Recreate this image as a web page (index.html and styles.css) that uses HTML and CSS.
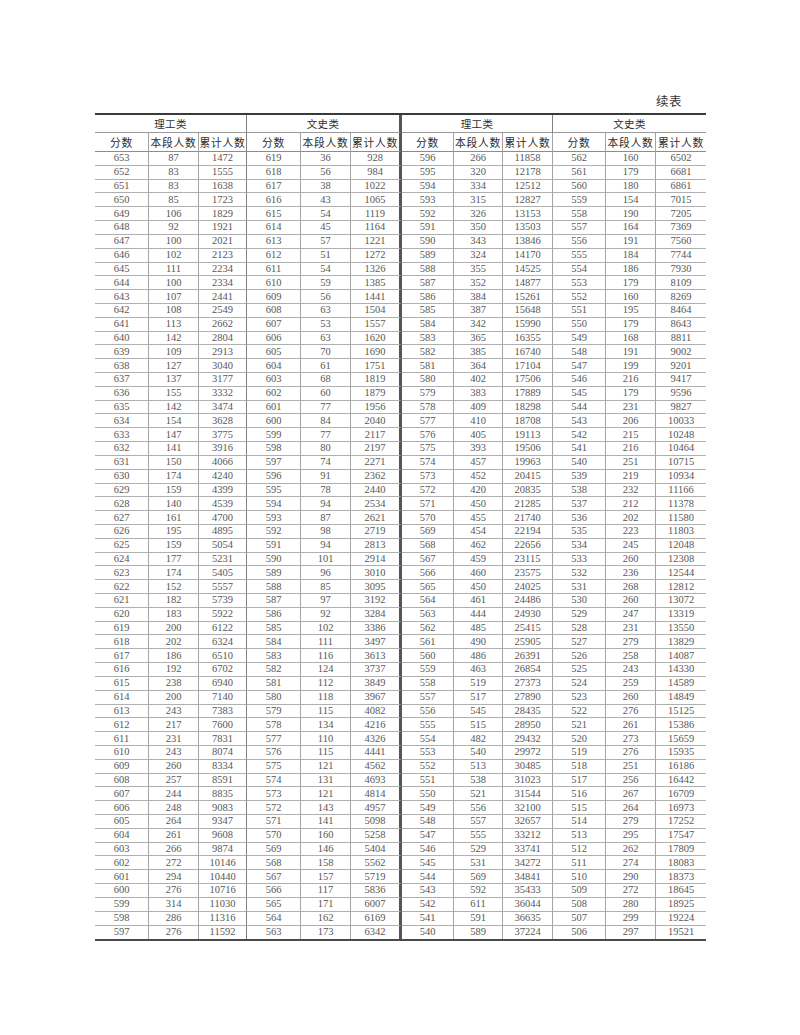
FILE: index.html
```html
<!DOCTYPE html>
<html lang="zh-CN">
<head>
<meta charset="utf-8">
<title>续表</title>
<link rel="stylesheet" href="styles.css">
</head>
<body>
<div class="page">
  <div class="caption">续表</div>
  <table class="score">
    <colgroup>
      <col class="c1"><col class="c2"><col class="c3">
      <col class="c4"><col class="c5"><col class="c6">
      <col class="c7"><col class="c8"><col class="c9">
      <col class="c10"><col class="c11"><col class="c12">
    </colgroup>
    <thead>
      <tr class="cat">
        <th colspan="3" class="grp">理工类</th>
        <th colspan="3" class="mid">文史类</th>
        <th colspan="3">理工类</th>
        <th colspan="3" class="end">文史类</th>
      </tr>
      <tr class="sub">
        <th>分数</th><th>本段人数</th><th>累计人数</th>
        <th>分数</th><th>本段人数</th><th>累计人数</th>
        <th>分数</th><th>本段人数</th><th>累计人数</th>
        <th>分数</th><th>本段人数</th><th>累计人数</th>
      </tr>
    </thead>
    <tbody>
<tr><td>653</td><td>87</td><td>1472</td><td>619</td><td>36</td><td>928</td><td>596</td><td>266</td><td>11858</td><td>562</td><td>160</td><td>6502</td></tr>
<tr><td>652</td><td>83</td><td>1555</td><td>618</td><td>56</td><td>984</td><td>595</td><td>320</td><td>12178</td><td>561</td><td>179</td><td>6681</td></tr>
<tr><td>651</td><td>83</td><td>1638</td><td>617</td><td>38</td><td>1022</td><td>594</td><td>334</td><td>12512</td><td>560</td><td>180</td><td>6861</td></tr>
<tr><td>650</td><td>85</td><td>1723</td><td>616</td><td>43</td><td>1065</td><td>593</td><td>315</td><td>12827</td><td>559</td><td>154</td><td>7015</td></tr>
<tr><td>649</td><td>106</td><td>1829</td><td>615</td><td>54</td><td>1119</td><td>592</td><td>326</td><td>13153</td><td>558</td><td>190</td><td>7205</td></tr>
<tr><td>648</td><td>92</td><td>1921</td><td>614</td><td>45</td><td>1164</td><td>591</td><td>350</td><td>13503</td><td>557</td><td>164</td><td>7369</td></tr>
<tr><td>647</td><td>100</td><td>2021</td><td>613</td><td>57</td><td>1221</td><td>590</td><td>343</td><td>13846</td><td>556</td><td>191</td><td>7560</td></tr>
<tr><td>646</td><td>102</td><td>2123</td><td>612</td><td>51</td><td>1272</td><td>589</td><td>324</td><td>14170</td><td>555</td><td>184</td><td>7744</td></tr>
<tr><td>645</td><td>111</td><td>2234</td><td>611</td><td>54</td><td>1326</td><td>588</td><td>355</td><td>14525</td><td>554</td><td>186</td><td>7930</td></tr>
<tr><td>644</td><td>100</td><td>2334</td><td>610</td><td>59</td><td>1385</td><td>587</td><td>352</td><td>14877</td><td>553</td><td>179</td><td>8109</td></tr>
<tr><td>643</td><td>107</td><td>2441</td><td>609</td><td>56</td><td>1441</td><td>586</td><td>384</td><td>15261</td><td>552</td><td>160</td><td>8269</td></tr>
<tr><td>642</td><td>108</td><td>2549</td><td>608</td><td>63</td><td>1504</td><td>585</td><td>387</td><td>15648</td><td>551</td><td>195</td><td>8464</td></tr>
<tr><td>641</td><td>113</td><td>2662</td><td>607</td><td>53</td><td>1557</td><td>584</td><td>342</td><td>15990</td><td>550</td><td>179</td><td>8643</td></tr>
<tr><td>640</td><td>142</td><td>2804</td><td>606</td><td>63</td><td>1620</td><td>583</td><td>365</td><td>16355</td><td>549</td><td>168</td><td>8811</td></tr>
<tr><td>639</td><td>109</td><td>2913</td><td>605</td><td>70</td><td>1690</td><td>582</td><td>385</td><td>16740</td><td>548</td><td>191</td><td>9002</td></tr>
<tr><td>638</td><td>127</td><td>3040</td><td>604</td><td>61</td><td>1751</td><td>581</td><td>364</td><td>17104</td><td>547</td><td>199</td><td>9201</td></tr>
<tr><td>637</td><td>137</td><td>3177</td><td>603</td><td>68</td><td>1819</td><td>580</td><td>402</td><td>17506</td><td>546</td><td>216</td><td>9417</td></tr>
<tr><td>636</td><td>155</td><td>3332</td><td>602</td><td>60</td><td>1879</td><td>579</td><td>383</td><td>17889</td><td>545</td><td>179</td><td>9596</td></tr>
<tr><td>635</td><td>142</td><td>3474</td><td>601</td><td>77</td><td>1956</td><td>578</td><td>409</td><td>18298</td><td>544</td><td>231</td><td>9827</td></tr>
<tr><td>634</td><td>154</td><td>3628</td><td>600</td><td>84</td><td>2040</td><td>577</td><td>410</td><td>18708</td><td>543</td><td>206</td><td>10033</td></tr>
<tr><td>633</td><td>147</td><td>3775</td><td>599</td><td>77</td><td>2117</td><td>576</td><td>405</td><td>19113</td><td>542</td><td>215</td><td>10248</td></tr>
<tr><td>632</td><td>141</td><td>3916</td><td>598</td><td>80</td><td>2197</td><td>575</td><td>393</td><td>19506</td><td>541</td><td>216</td><td>10464</td></tr>
<tr><td>631</td><td>150</td><td>4066</td><td>597</td><td>74</td><td>2271</td><td>574</td><td>457</td><td>19963</td><td>540</td><td>251</td><td>10715</td></tr>
<tr><td>630</td><td>174</td><td>4240</td><td>596</td><td>91</td><td>2362</td><td>573</td><td>452</td><td>20415</td><td>539</td><td>219</td><td>10934</td></tr>
<tr><td>629</td><td>159</td><td>4399</td><td>595</td><td>78</td><td>2440</td><td>572</td><td>420</td><td>20835</td><td>538</td><td>232</td><td>11166</td></tr>
<tr><td>628</td><td>140</td><td>4539</td><td>594</td><td>94</td><td>2534</td><td>571</td><td>450</td><td>21285</td><td>537</td><td>212</td><td>11378</td></tr>
<tr><td>627</td><td>161</td><td>4700</td><td>593</td><td>87</td><td>2621</td><td>570</td><td>455</td><td>21740</td><td>536</td><td>202</td><td>11580</td></tr>
<tr><td>626</td><td>195</td><td>4895</td><td>592</td><td>98</td><td>2719</td><td>569</td><td>454</td><td>22194</td><td>535</td><td>223</td><td>11803</td></tr>
<tr><td>625</td><td>159</td><td>5054</td><td>591</td><td>94</td><td>2813</td><td>568</td><td>462</td><td>22656</td><td>534</td><td>245</td><td>12048</td></tr>
<tr><td>624</td><td>177</td><td>5231</td><td>590</td><td>101</td><td>2914</td><td>567</td><td>459</td><td>23115</td><td>533</td><td>260</td><td>12308</td></tr>
<tr><td>623</td><td>174</td><td>5405</td><td>589</td><td>96</td><td>3010</td><td>566</td><td>460</td><td>23575</td><td>532</td><td>236</td><td>12544</td></tr>
<tr><td>622</td><td>152</td><td>5557</td><td>588</td><td>85</td><td>3095</td><td>565</td><td>450</td><td>24025</td><td>531</td><td>268</td><td>12812</td></tr>
<tr><td>621</td><td>182</td><td>5739</td><td>587</td><td>97</td><td>3192</td><td>564</td><td>461</td><td>24486</td><td>530</td><td>260</td><td>13072</td></tr>
<tr><td>620</td><td>183</td><td>5922</td><td>586</td><td>92</td><td>3284</td><td>563</td><td>444</td><td>24930</td><td>529</td><td>247</td><td>13319</td></tr>
<tr><td>619</td><td>200</td><td>6122</td><td>585</td><td>102</td><td>3386</td><td>562</td><td>485</td><td>25415</td><td>528</td><td>231</td><td>13550</td></tr>
<tr><td>618</td><td>202</td><td>6324</td><td>584</td><td>111</td><td>3497</td><td>561</td><td>490</td><td>25905</td><td>527</td><td>279</td><td>13829</td></tr>
<tr><td>617</td><td>186</td><td>6510</td><td>583</td><td>116</td><td>3613</td><td>560</td><td>486</td><td>26391</td><td>526</td><td>258</td><td>14087</td></tr>
<tr><td>616</td><td>192</td><td>6702</td><td>582</td><td>124</td><td>3737</td><td>559</td><td>463</td><td>26854</td><td>525</td><td>243</td><td>14330</td></tr>
<tr><td>615</td><td>238</td><td>6940</td><td>581</td><td>112</td><td>3849</td><td>558</td><td>519</td><td>27373</td><td>524</td><td>259</td><td>14589</td></tr>
<tr><td>614</td><td>200</td><td>7140</td><td>580</td><td>118</td><td>3967</td><td>557</td><td>517</td><td>27890</td><td>523</td><td>260</td><td>14849</td></tr>
<tr><td>613</td><td>243</td><td>7383</td><td>579</td><td>115</td><td>4082</td><td>556</td><td>545</td><td>28435</td><td>522</td><td>276</td><td>15125</td></tr>
<tr><td>612</td><td>217</td><td>7600</td><td>578</td><td>134</td><td>4216</td><td>555</td><td>515</td><td>28950</td><td>521</td><td>261</td><td>15386</td></tr>
<tr><td>611</td><td>231</td><td>7831</td><td>577</td><td>110</td><td>4326</td><td>554</td><td>482</td><td>29432</td><td>520</td><td>273</td><td>15659</td></tr>
<tr><td>610</td><td>243</td><td>8074</td><td>576</td><td>115</td><td>4441</td><td>553</td><td>540</td><td>29972</td><td>519</td><td>276</td><td>15935</td></tr>
<tr><td>609</td><td>260</td><td>8334</td><td>575</td><td>121</td><td>4562</td><td>552</td><td>513</td><td>30485</td><td>518</td><td>251</td><td>16186</td></tr>
<tr><td>608</td><td>257</td><td>8591</td><td>574</td><td>131</td><td>4693</td><td>551</td><td>538</td><td>31023</td><td>517</td><td>256</td><td>16442</td></tr>
<tr><td>607</td><td>244</td><td>8835</td><td>573</td><td>121</td><td>4814</td><td>550</td><td>521</td><td>31544</td><td>516</td><td>267</td><td>16709</td></tr>
<tr><td>606</td><td>248</td><td>9083</td><td>572</td><td>143</td><td>4957</td><td>549</td><td>556</td><td>32100</td><td>515</td><td>264</td><td>16973</td></tr>
<tr><td>605</td><td>264</td><td>9347</td><td>571</td><td>141</td><td>5098</td><td>548</td><td>557</td><td>32657</td><td>514</td><td>279</td><td>17252</td></tr>
<tr><td>604</td><td>261</td><td>9608</td><td>570</td><td>160</td><td>5258</td><td>547</td><td>555</td><td>33212</td><td>513</td><td>295</td><td>17547</td></tr>
<tr><td>603</td><td>266</td><td>9874</td><td>569</td><td>146</td><td>5404</td><td>546</td><td>529</td><td>33741</td><td>512</td><td>262</td><td>17809</td></tr>
<tr><td>602</td><td>272</td><td>10146</td><td>568</td><td>158</td><td>5562</td><td>545</td><td>531</td><td>34272</td><td>511</td><td>274</td><td>18083</td></tr>
<tr><td>601</td><td>294</td><td>10440</td><td>567</td><td>157</td><td>5719</td><td>544</td><td>569</td><td>34841</td><td>510</td><td>290</td><td>18373</td></tr>
<tr><td>600</td><td>276</td><td>10716</td><td>566</td><td>117</td><td>5836</td><td>543</td><td>592</td><td>35433</td><td>509</td><td>272</td><td>18645</td></tr>
<tr><td>599</td><td>314</td><td>11030</td><td>565</td><td>171</td><td>6007</td><td>542</td><td>611</td><td>36044</td><td>508</td><td>280</td><td>18925</td></tr>
<tr><td>598</td><td>286</td><td>11316</td><td>564</td><td>162</td><td>6169</td><td>541</td><td>591</td><td>36635</td><td>507</td><td>299</td><td>19224</td></tr>
<tr><td>597</td><td>276</td><td>11592</td><td>563</td><td>173</td><td>6342</td><td>540</td><td>589</td><td>37224</td><td>506</td><td>297</td><td>19521</td></tr>
    </tbody>
  </table>
</div>
</body>
</html>
```

FILE: styles.css
```css
* {
  box-sizing: border-box;
}

html, body {
  margin: 0;
  padding: 0;
  background: #ffffff;
}

.page {
  width: 800px;
  padding: 90px 0 0 95px;
}

.caption {
  width: 611px;
  height: 23px;
  padding-right: 24px;
  text-align: right;
  font-family: "Noto Sans CJK SC", sans-serif;
  font-size: 12.5px;
  line-height: 21px;
  color: #333333;
  letter-spacing: 0.5px;
}

.score {
  width: 611px;
  table-layout: fixed;
  border-collapse: separate;
  border-spacing: 0;
  border-top: 2px solid #3a3a3a;
  border-bottom: 2px solid #4a4a4a;
  font-family: "Liberation Serif", "Noto Sans CJK SC", serif;
  color: #585858;
}

.c1 { width: 54px; }
.c2 { width: 50px; }
.c3 { width: 48px; }
.c4 { width: 54px; }
.c5 { width: 50px; }
.c6 { width: 51px; }
.c7 { width: 52px; }
.c8 { width: 49px; }
.c9 { width: 50px; }
.c10 { width: 53px; }
.c11 { width: 50px; }
.c12 { width: 50px; }

.score th,
.score td {
  padding: 0;
  text-align: center;
  vertical-align: middle;
  border-right: 1px solid #a4a4a4;
  border-bottom: 1px solid #b0b0b0;
  overflow: hidden;
  white-space: nowrap;
}

.score th {
  font-family: "Noto Sans CJK SC", sans-serif;
  font-weight: normal;
  color: #2e2e2e;
}

.cat th {
  height: 18px;
  line-height: 16px;
  font-size: 10.5px;
  letter-spacing: 0.4px;
  border-bottom-color: #9a9a9a;
}

.cat th.grp {
  border-right-color: #808080;
}

.cat th.mid {
  border-right: 3px solid #555555;
}

.cat th.end {
  border-right: none;
}

.sub th {
  height: 19px;
  line-height: 18px;
  font-size: 10.8px;
  letter-spacing: 0.7px;
  border-bottom-color: #8c8c8c;
}

.score td {
  height: 13.82px;
  line-height: 12px;
  font-size: 10.5px;
}

.score tr > :nth-child(3) {
  border-right-color: #808080;
}

.score .sub > :nth-child(6),
.score tbody tr > :nth-child(6) {
  border-right: 3px solid #555555;
}

.score .sub > :last-child,
.score tbody tr > :last-child {
  border-right: none;
}

.score tbody tr:last-child td {
  border-bottom: none;
}
```
